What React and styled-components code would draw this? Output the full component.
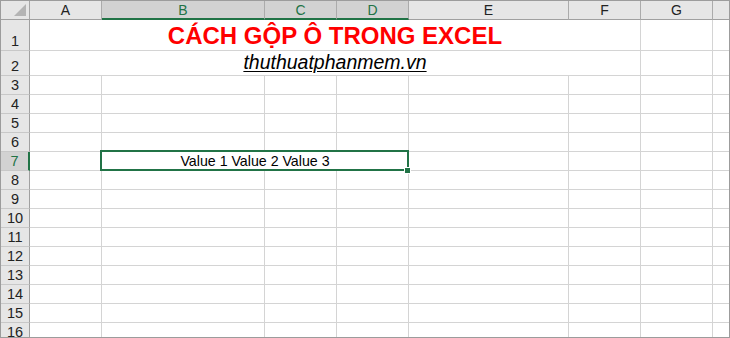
import React from "react";
import styled, { createGlobalStyle, css } from "styled-components";

const GREEN = "#217346";
const GRID = "#d4d4d4";

const GlobalStyle = createGlobalStyle`
  html, body {
    margin: 0;
    padding: 0;
    background: #ffffff;
  }
  body {
    font-family: "Liberation Sans", Arial, sans-serif;
  }
`;

const Sheet = styled.div`
  width: 730px;
  height: 338px;
  box-sizing: border-box;
  border: 1px solid #9c9c9c;
  overflow: hidden;
  display: grid;
  grid-template-columns: 29px 72px 163px 72px 72px 160px 72px 72px 1fr;
  grid-template-rows: 19px 31px 25px repeat(14, 19px);
  background: #fff;
`;

const Cell = styled.div`
  box-sizing: border-box;
  position: relative;
  border-right: ${(p) => (p.$last ? "none" : `1px solid ${GRID}`)};
  border-bottom: 1px solid ${GRID};
  grid-column: ${(p) => (p.$span ? `span ${p.$span}` : "auto")};
  display: flex;
  align-items: flex-end;
  justify-content: center;
  white-space: nowrap;
  min-width: 0;
`;

const Corner = styled.div`
  box-sizing: border-box;
  background: #e6e6e6;
  border-right: 1px solid #a6a6a6;
  border-bottom: 1px solid #a0a0a0;
  position: relative;
  svg {
    position: absolute;
    right: 3px;
    bottom: 3px;
  }
`;

const ColHead = styled.div`
  box-sizing: border-box;
  background: ${(p) => (p.$selected ? "#d2d2d2" : "#e6e6e6")};
  border-right: ${(p) => (p.$last ? "none" : "1px solid #ababab")};
  border-bottom: ${(p) =>
    p.$selected ? `2px solid ${GREEN}` : "1px solid #a0a0a0"};
  color: ${(p) => (p.$selected ? GREEN : "#222")};
  font-size: 14px;
  line-height: 16px;
  display: flex;
  align-items: center;
  justify-content: center;
  ${(p) =>
    p.$selected &&
    css`
      padding-top: 1px;
    `}
`;

const RowHead = styled.div`
  box-sizing: border-box;
  background: ${(p) => (p.$selected ? "#d2d2d2" : "#e6e6e6")};
  border-right: ${(p) =>
    p.$selected ? `2px solid ${GREEN}` : "1px solid #a0a0a0"};
  border-bottom: 1px solid #c8c8c8;
  color: ${(p) => (p.$selected ? GREEN : "#222")};
  font-size: 14.5px;
  line-height: 16px;
  display: flex;
  align-items: flex-end;
  justify-content: center;
  padding-bottom: 1px;
`;

const Title = styled.span`
  color: #ff0000;
  font-weight: bold;
  font-size: 24px;
  line-height: 27px;
  margin-bottom: 1px;
`;

const Site = styled.span`
  color: #000;
  font-style: italic;
  text-decoration: underline;
  text-underline-offset: 2px;
  font-size: 19.5px;
  line-height: 22px;
  margin-bottom: 2px;
`;

const Value = styled.span`
  color: #000;
  font-size: 14.2px;
  line-height: 16px;
  margin-bottom: 1px;
`;

const Selection = styled.div`
  position: absolute;
  top: -2px;
  left: -2px;
  right: -1px;
  bottom: -1px;
  border: 2px solid ${GREEN};
  z-index: 2;
  pointer-events: none;
`;

const FillHandle = styled.div`
  position: absolute;
  right: -3px;
  bottom: -4px;
  width: 5px;
  height: 5px;
  background: ${GREEN};
  border: 1px solid #fff;
  z-index: 3;
`;

const COLS = ["A", "B", "C", "D", "E", "F", "G", ""];
const SELECTED_COLS = ["B", "C", "D"];
const ROWS = Array.from({ length: 16 }, (_, i) => i + 1);

function plainCells(row, from) {
  return COLS.slice(from).map((c, i) => (
    <Cell key={`${row}-${from + i}`} $last={from + i === COLS.length - 1} />
  ));
}

function renderRow(row) {
  const head = (
    <RowHead key={`h${row}`} $selected={row === 7}>
      {row}
    </RowHead>
  );

  if (row === 1) {
    return [
      head,
      <Cell key="r1m" $span={6}>
        <Title>CÁCH GỘP Ô TRONG EXCEL</Title>
      </Cell>,
      ...plainCells(row, 6),
    ];
  }

  if (row === 2) {
    return [
      head,
      <Cell key="r2m" $span={6}>
        <Site>thuthuatphanmem.vn</Site>
      </Cell>,
      ...plainCells(row, 6),
    ];
  }

  if (row === 7) {
    return [
      head,
      <Cell key="r7a" />,
      <Cell key="r7m" $span={3}>
        <Value>Value 1 Value 2 Value 3</Value>
        <Selection />
        <FillHandle />
      </Cell>,
      ...plainCells(row, 4),
    ];
  }

  return [head, ...plainCells(row, 0)];
}

export default function App() {
  return (
    <>
      <GlobalStyle />
      <Sheet>
        <Corner>
          <svg width="12" height="12" viewBox="0 0 12 12">
            <polygon points="12,0 12,12 0,12" fill="#b4b4b4" />
          </svg>
        </Corner>
        {COLS.map((c, i) => (
          <ColHead
            key={`c${i}`}
            $selected={SELECTED_COLS.includes(c)}
            $last={i === COLS.length - 1}
          >
            {c}
          </ColHead>
        ))}
        {ROWS.map((r) => renderRow(r))}
      </Sheet>
    </>
  );
}
